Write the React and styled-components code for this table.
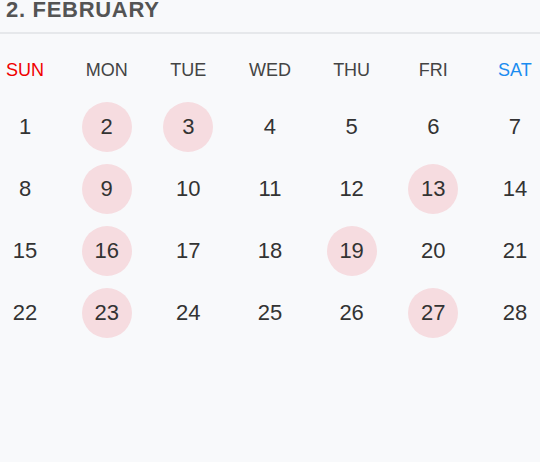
import React from "react";
import styled, { createGlobalStyle } from "styled-components";

const GlobalStyle = createGlobalStyle`
  html, body {
    margin: 0;
    padding: 0;
    background: #f8f9fb;
    font-family: "Liberation Sans", Arial, sans-serif;
  }
`;

//styled-components
const Page = styled.div`
  width: 540px;
  height: 462px;
  overflow: hidden;
  background: #f8f9fb;
`;
const Header = styled.div`
  padding: 0 6px 12px;
  border-bottom: 2px solid #e6e8eb;
  & > h1 {
    margin: 0;
    font-size: 22px;
    line-height: 20px;
    font-weight: bold;
    letter-spacing: 0.7px;
    color: #545454;
  }
`;
const Week = styled.div`
  display: grid;
  grid-template-columns: repeat(7, 50px);
  justify-content: space-between;
  margin-top: 27px;
`;
const DayName = styled.div`
  text-align: center;
  font-size: 18px;
  line-height: 18px;
  color: ${(p) => (p.$weekday === 0 ? "#f00000" : p.$weekday === 6 ? "#1a8cf0" : "#444")};
`;
const Days = styled.div`
  display: grid;
  grid-template-columns: repeat(7, 50px);
  grid-auto-rows: 50px;
  justify-content: space-between;
  row-gap: 12px;
  margin-top: 23px;
`;
const Day = styled.div`
  display: flex;
  align-items: center;
  justify-content: center;
  border-radius: 50%;
  font-size: 22px;
  color: #333;
  background: ${(p) => (p.$marked ? "#f6dce0" : "transparent")};
`;

const names = ["SUN", "MON", "TUE", "WED", "THU", "FRI", "SAT"];
const marked = [2, 3, 9, 13, 16, 19, 23, 27];
const days = Array.from({ length: 28 }, (_, i) => i + 1);

const App = () => {
  return (
    <Page>
      <GlobalStyle />
      <Header>
        <h1>2. FEBRUARY</h1>
      </Header>
      <Week>
        {names.map((n, i) => (
          <DayName key={n} $weekday={i}>
            {n}
          </DayName>
        ))}
      </Week>
      <Days>
        {days.map((d) => (
          <Day key={d} $marked={marked.includes(d)}>
            {d}
          </Day>
        ))}
      </Days>
    </Page>
  );
};

export default App;
